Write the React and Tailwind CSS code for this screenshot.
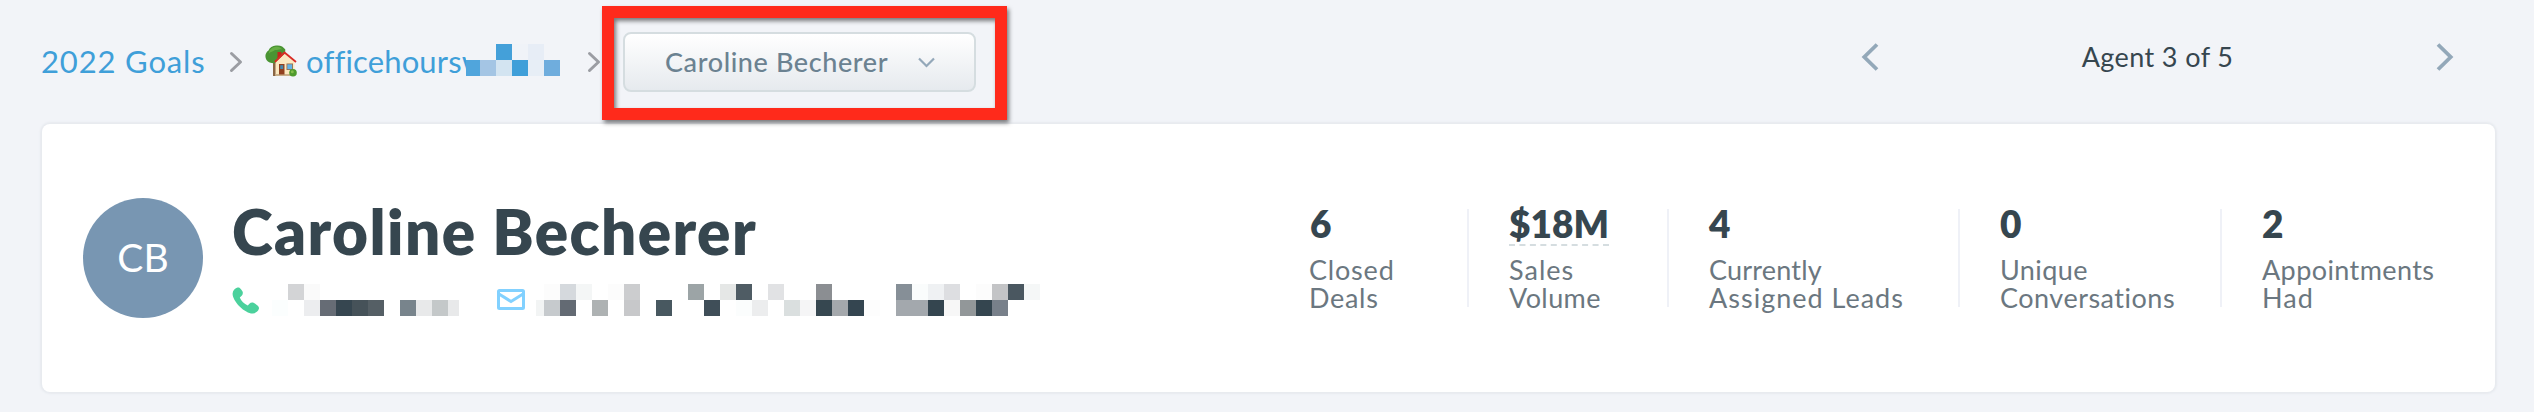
const stats = [
  { value: "6", lines: ["Closed", "Deals"], width: "w-[159px]", spacing: ["tracking-[0.8px] -ml-px", "tracking-[0.7px] -ml-px"] },
  { value: "$18M", lines: ["Sales", "Volume"], width: "w-[160px]", spacing: ["tracking-[1px]", "tracking-[0.4px]"], dashed: true },
  { value: "4", lines: ["Currently", "Assigned Leads"], width: "w-[251px]", spacing: ["tracking-[0.2px]", "tracking-[1px]"] },
  { value: "0", lines: ["Unique", "Conversations"], width: "w-[222px]", spacing: ["tracking-[0.4px]", "tracking-[0.5px]"] },
  { value: "2", lines: ["Appointments", "Had"], width: "w-[180px]", spacing: ["tracking-[0.4px]", "tracking-[1px]"], last: true },
];

// Each row is a list of 16px cells, "" leaves the cell empty
const siteCells = {
  top: ["#f2f4f8", "#44a0d9", "#f0f3f8", "#e7edf6", ""],
  bottom: ["#a4c5e4", "#d3e4f1", "#3f9fd9", "#e7eef6", "#6faddd"],
};

const phoneCells = {
  top: ["", "#d3d4d6", "#fafafa", "", "", "", "", "", "", "", "", ""],
  bottom: ["#fbfefe", "", "#ecedef", "#666c75", "#364650", "#465259", "#555f65", "", "#78848c", "#e8e9ea", "#c4c8c9", "#e8e9ea"],
};

const emailCells = {
  top: [
    "#fcfcfc", "#d5d9dd", "#f4f6f6", "", "#fcfcfc", "#cccdcf", "", "", "", "#9ca4a6", "", "#e5e7e6", "#4f5c64", "", "#e1e2e4", "",
    "", "#8b8e92", "", "", "", "", "#868f97", "#fafcfc", "#eff1f3", "#dddee1", "", "#fcfcfc", "#c3c4c6", "#4a5760", "#f5f7f7",
  ],
  bottom: [
    "#c6cacd", "#636a73", "", "#aeb2b3", "", "#c7c8ca", "", "#485860", "", "", "#3f4e58", "", "#fbfdfd", "#ecedee", "", "#dadfdf",
    "#f5f5f6", "#364750", "#a4a8ac", "#344550", "#fdfdfd", "", "#a3a8ad", "#a3a8ad", "#34454f", "#f7f7f7", "#929799", "#34454f", "#78808a", "", "",
  ],
};

function Mosaic({ cells, className = "" }) {
  return (
    <div className={`shrink-0 overflow-hidden ${className}`}>
      {[cells.top, cells.bottom].map((row, r) => (
        <div key={r} className="flex">
          {row.map((color, i) => (
            <div key={i} className="size-4 shrink-0" style={{ backgroundColor: color || "transparent" }} />
          ))}
        </div>
      ))}
    </div>
  );
}

function Crumb() {
  return (
    <svg className="h-[22px] w-[14px] shrink-0" viewBox="0 0 14 22" fill="none" stroke="#9b9da3" strokeWidth="3" strokeLinecap="round" strokeLinejoin="round">
      <path d="M2.500 2.500 11.500 11 2.500 19.500" />
    </svg>
  );
}

function House() {
  return (
    <svg className="size-8 shrink-0" viewBox="0 0 32 32">
      <path d="M8 15h4v16H8z" fill="#8a6544" />
      <path d="M11 .5c4-.6 7.500 1 9.300 4L20 12l-8 6c-4 .8-8.500 0-10.500-3C-.7 11 .6 7.500 3.500 5.500 4.500 2.500 7.500.7 11 .5z" fill="#4a9433" />
      <path d="M10 2c3-.6 6 .3 7 2.500-3-1-4.500 1-7 .5-2 1.800-4.500 1.500-6 3.500C4 5 6.500 2.600 10 2z" fill="#67ae45" />
      <path d="M12.500 7h4v6h-4z" fill="#c4251d" />
      <path d="m20 8.500 9.500 8.500v13.500H10.500V17z" fill="#fbe8c0" />
      <path d="M10.500 29h19v2h-19z" fill="#c9b08b" />
      <path d="m9.800 17 9.700-9.500L31 17" fill="none" stroke="#d92b25" strokeWidth="1.800" strokeLinejoin="round" />
      <path d="M14 19h5.500v10.500H14z" fill="#91401f" />
      <path d="M15.200 20.200h3v3.800h-3z" fill="#4589ad" />
      <path d="M21.500 18.500h6.500v6.500h-6.500z" fill="#9a6a42" />
      <path d="M22.300 19.300h4.900v4.900h-4.900z" fill="#63b4e8" />
      <circle cx="28" cy="27.800" r="3.800" fill="#4f9b2d" />
      <circle cx="27.300" cy="26.800" r="1.500" fill="#83bd4b" />
    </svg>
  );
}

function PhoneIcon() {
  return (
    <svg className="h-[27px] w-[28px] shrink-0" viewBox="0 0 28 27" fill="#4bd19c">
      <path d="M5.500.5C3.300 1.200.8 3.400.6 6.500.5 10 3.400 15.300 7.600 19.400c4.500 4.500 9.800 7.300 13.300 7 3-.2 5.400-2.500 6-4.600.2-.8 0-1.500-.5-2.200-1-1.400-2.800-2.800-4.500-3.700-1.500-.7-3.400-.4-4.500.8l-1.600 1.700c-3.600-1.300-6.700-4.300-8-7.900l1.900-1.800c1.200-1.200 1.500-3 .7-4.500C9.500 2.800 8.500 1.600 7.500.8 6.900.4 6.200.3 5.500.5z" />
    </svg>
  );
}

function MailIcon() {
  return (
    <svg className="h-[23px] w-[30px] shrink-0" viewBox="0 0 30 23" fill="none" stroke="#82d1ff" strokeWidth="3">
      <rect x="2.500" y="2.500" width="25" height="18" rx="1" />
      <path d="m3 6 12 7.500L27 6" />
    </svg>
  );
}

function Arrow({ flip }) {
  return (
    <svg className={`h-7 w-[18px] ${flip ? "-scale-x-100" : ""}`} viewBox="0 0 18 28" fill="none" stroke="#93a8b9" strokeWidth="3.800">
      <path d="M16 1.500 3.300 14 16 26.500" />
    </svg>
  );
}

function Stat({ value, lines, width, spacing, dashed, last }) {
  return (
    <div className={`h-[98px] shrink-0 ${width} ${last ? "" : "mr-10 border-r-2 border-[#eff1f7]"}`}>
      <div className={`inline-block h-[37px] text-[37px] leading-[30px] font-extrabold whitespace-nowrap text-[#36464f] ${dashed ? "border-b-2 border-dashed border-[#d5dde0]" : ""}`}>
        {value}
      </div>
      <div className="mt-[10px] text-[27px] leading-[28px] whitespace-nowrap text-[#6b7780]">
        <div className={spacing[0]}>{lines[0]}</div>
        <div className={spacing[1]}>{lines[1]}</div>
      </div>
    </div>
  );
}

export default function App() {
  return (
    <div className="h-[412px] w-[2534px] overflow-hidden bg-[#f2f4f8] font-['Lato',sans-serif]">
      {/* Breadcrumb and agent pager */}
      <div className="flex h-[124px] items-start pl-[41px]">
        <nav className="flex h-[124px] w-[561px] items-start text-[31px] leading-9 text-[#3f9fd9]">
          <a className="mt-[43px] w-[188px] shrink-0 tracking-[0.85px] whitespace-nowrap">2022 Goals</a>
          <div className="mt-[51px]"><Crumb /></div>
          <div className="mt-[45px] ml-[22px]"><House /></div>
          <a className="mt-[43px] ml-[9px] w-[160px] shrink-0 tracking-[0.15px] whitespace-nowrap">officehoursw</a>
          <div className="relative flex shrink-0">
            <div className="mt-[44px] h-8 w-[14px] shrink-0 border-t-16 border-[#f2f4f8] bg-[#50a5dc]" />
            <Mosaic cells={siteCells} className="mt-[44px] w-20" />
          </div>
          <div className="mt-[51px] ml-[27px] shrink-0"><Crumb /></div>
        </nav>

        <div className="relative mt-1.5 h-[114px] w-[405px] shrink-0 pt-[26px] pl-[21px]">
          <button className="flex h-[60px] w-[353px] items-center rounded-lg border-2 border-[#d5dde0] bg-linear-to-b from-white to-[#e6eaee] pl-[40px] text-[27px] text-[#6b8291]">
            <span className="w-[253px] text-left font-medium tracking-[0.6px] whitespace-nowrap">Caroline Becherer</span>
            <svg className="h-[11px] w-[17px]" viewBox="0 0 17 11" fill="none" stroke="#93a8b9" strokeWidth="2.200">
              <path d="m1 1.500 7.500 7.500L16 1.500" />
            </svg>
          </button>
          {/* Highlight frame around the agent picker */}
          <div className="pointer-events-none absolute inset-0 z-10 border-12 border-[#ff2a1b] drop-shadow-[2px_3px_2px_rgba(0,0,0,0.5)]" />
        </div>

        <div className="mt-[39px] ml-[854px] flex h-9 w-[593px] items-center justify-between">
          <Arrow />
          <span className="text-[27px] tracking-[0.4px] whitespace-nowrap text-[#36464f]">Agent 3 of 5</span>
          <Arrow flip />
        </div>
      </div>

      {/* Agent summary card */}
      <div className="ml-[42px] flex h-[268px] w-[2453px] items-start rounded-lg bg-white shadow-[0_0_2px_2px_#e7eaef]">
        <div className="mt-[74px] ml-[41px] flex size-[120px] shrink-0 items-center justify-center rounded-full bg-[#7896b2] pb-0.5 text-[39px] text-white">
          CB
        </div>
        <div className="mt-[71px] ml-[29px] w-[1078px] shrink-0">
          <h1 className="h-[89px] text-[62px] leading-[73px] font-extrabold tracking-[1.4px] whitespace-nowrap text-[#36464f]">Caroline Becherer</h1>
          <div className="flex items-start">
            <div className="mt-[3px]"><PhoneIcon /></div>
            <Mosaic cells={phoneCells} className="ml-3 w-[187px]" />
            <div className="mt-1 ml-[37px]"><MailIcon /></div>
            <div className="mt-4 ml-[10px] h-4 w-2 shrink-0 bg-[#f2f4f4]" />
            <Mosaic cells={emailCells} />
          </div>
        </div>
        <div className="mt-[85px] flex">
          {stats.map((stat) => (
            <Stat key={stat.lines[0]} {...stat} />
          ))}
        </div>
      </div>
    </div>
  );
}
